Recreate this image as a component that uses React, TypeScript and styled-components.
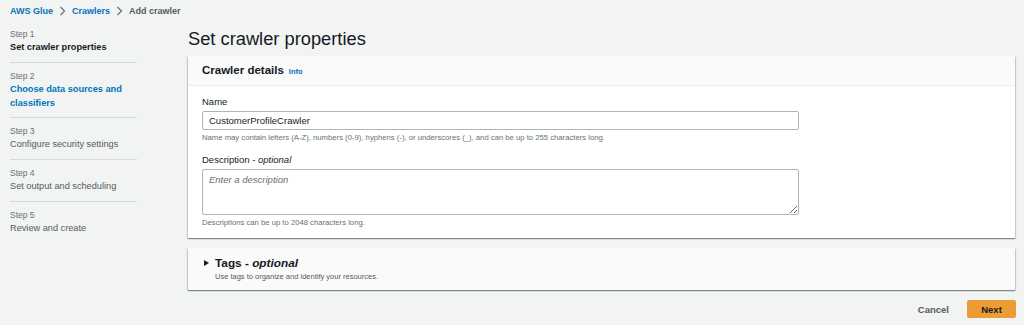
import * as React from "react"
import styled, { createGlobalStyle } from 'styled-components'

const Global = createGlobalStyle`
  body {
    margin: 0;
    background: #f2f3f3;
    font-family: "Liberation Sans", Arial, sans-serif;
    color: #16191f;
  }
`

const steps = [
  { n: 1, title: 'Set crawler properties', state: 'current' },
  { n: 2, title: 'Choose data sources and classifiers', state: 'link' },
  { n: 3, title: 'Configure security settings', state: 'off' },
  { n: 4, title: 'Set output and scheduling', state: 'off' },
  { n: 5, title: 'Review and create', state: 'off' },
]

export default function App() {
  return (
    <Page>
      <Global />
      <Breadcrumbs>
        <Crumb>AWS Glue</Crumb>
        <Chevron />
        <Crumb>Crawlers</Crumb>
        <Chevron />
        <Crumb current>Add crawler</Crumb>
      </Breadcrumbs>
      <Layout>
        <Sidebar>
          {steps.map(s => (
            <StepItem key={s.n}>
              <StepLabel>Step {s.n}</StepLabel>
              <StepTitle state={s.state}>{s.title}</StepTitle>
            </StepItem>
          ))}
        </Sidebar>
        <Main>
          <Title>Set crawler properties</Title>
          <Panel>
            <PanelHeader>
              <PanelTitle>Crawler details</PanelTitle>
              <Info>Info</Info>
            </PanelHeader>
            <PanelBody>
              <Field>
                <Label>Name</Label>
                <Input defaultValue="CustomerProfileCrawler" />
                <Hint>Name may contain letters (A-Z), numbers (0-9), hyphens (-), or underscores (_), and can be up to 255 characters long.</Hint>
              </Field>
              <Field>
                <Label>Description - <em>optional</em></Label>
                <TextArea placeholder="Enter a description" />
                <Hint>Descriptions can be up to 2048 characters long.</Hint>
              </Field>
            </PanelBody>
          </Panel>
          <TagsPanel>
            <Caret />
            <div>
              <TagsTitle>Tags - <em>optional</em></TagsTitle>
              <TagsHint>Use tags to organize and identify your resources.</TagsHint>
            </div>
          </TagsPanel>
          <Actions>
            <CancelButton>Cancel</CancelButton>
            <NextButton>Next</NextButton>
          </Actions>
        </Main>
      </Layout>
    </Page>
  )
}

function Chevron() {
  return (
    <svg width="7" height="10" viewBox="0 0 7 10" style={{ margin: '0 6px' }}>
      <path d="M1.5 1 L5.5 5 L1.5 9" fill="none" stroke="#687078" strokeWidth="1.2" />
    </svg>
  )
}

const Page = styled.div`
  width: 1024px;
  height: 325px;
  overflow: hidden;
`

const Breadcrumbs = styled.div`
  display: flex;
  align-items: center;
  height: 20px;
  padding: 1px 10px 0;
  font-size: 9px;
  font-weight: bold;
`

const Crumb = styled.span<{ current?: boolean }>`
  color: ${p => (p.current ? '#545b64' : '#0073bb')};
`

const Layout = styled.div`
  display: grid;
  grid-template-columns: 127px 1fr;
  column-gap: 51px;
  padding: 0 9px 0 10px;
`

const Sidebar = styled.div`
  display: flex;
  flex-direction: column;
  padding-top: 7px;
`

const StepItem = styled.div`
  padding: 7px 0 8px;
  border-bottom: 1px solid #d5dbdb;
  &:first-child { padding-top: 0; }
  &:nth-child(2) { padding-bottom: 7px; }
  &:last-child { border-bottom: none; }
`

const StepLabel = styled.div`
  font-size: 8.5px;
  color: #687078;
  line-height: 12px;
`

const StepTitle = styled.div<{ state: string }>`
  font-size: 9.2px;
  line-height: 14px;
  font-weight: ${p => (p.state === 'off' ? 'normal' : 'bold')};
  color: ${p => (p.state === 'current' ? '#16191f' : p.state === 'link' ? '#0073bb' : '#545b64')};
`

const Main = styled.div`
  display: flex;
  flex-direction: column;
`

const Title = styled.h1`
  margin: 1px 0 0;
  font-size: 18.3px;
  font-weight: normal;
  line-height: 34px;
  color: #16191f;
`

const Panel = styled.div`
  background: #fff;
  box-shadow: 0 1px 1px 0 rgba(0, 28, 36, 0.3), 1px 1px 1px 0 rgba(0, 28, 36, 0.15), -1px 1px 1px 0 rgba(0, 28, 36, 0.15);
`

const PanelHeader = styled.div`
  display: flex;
  align-items: baseline;
  gap: 5px;
  background: #fafafa;
  height: 30px;
  box-sizing: border-box;
  padding: 8px 14px 0;
  border-bottom: 1px solid #eaeded;
`

const PanelTitle = styled.span`
  font-size: 11.5px;
  font-weight: bold;
`

const Info = styled.span`
  font-size: 7.5px;
  font-weight: bold;
  color: #0073bb;
`

const PanelBody = styled.div`
  padding: 9px 14px 10px;
  display: flex;
  flex-direction: column;
  gap: 10px;
`

const Field = styled.div`
  display: flex;
  flex-direction: column;
  width: 597px;
`

const Label = styled.label`
  font-size: 9.5px;
  line-height: 14px;
  margin-bottom: 2px;
  em { font-style: italic; }
`

const Input = styled.input`
  box-sizing: border-box;
  height: 19px;
  border: 1px solid #aab7b8;
  border-radius: 2px;
  padding: 0 6px;
  font-family: inherit;
  font-size: 9.5px;
  color: #16191f;
  outline: none;
`

const TextArea = styled.textarea`
  box-sizing: border-box;
  height: 46px;
  border: 1px solid #aab7b8;
  border-radius: 2px;
  padding: 4px 6px;
  font-family: inherit;
  font-size: 9.5px;
  resize: vertical;
  outline: none;
  &::placeholder { color: #687078; font-style: italic; }
`

const Hint = styled.div`
  font-size: 7.7px;
  color: #687078;
  margin-top: 3px;
  line-height: 10px;
`

const TagsPanel = styled.div`
  margin-top: 10px;
  height: 42px;
  box-sizing: border-box;
  background: #fafafa;
  display: flex;
  gap: 6px;
  padding: 7px 16px 0;
  box-shadow: 0 1px 1px 0 rgba(0, 28, 36, 0.3), 1px 1px 1px 0 rgba(0, 28, 36, 0.15), -1px 1px 1px 0 rgba(0, 28, 36, 0.15);
`

const Caret = styled.span`
  width: 0;
  height: 0;
  margin-top: 5px;
  border-top: 3.5px solid transparent;
  border-bottom: 3.5px solid transparent;
  border-left: 5px solid #16191f;
`

const TagsTitle = styled.div`
  font-size: 11.8px;
  font-weight: bold;
  line-height: 16px;
  em { font-style: italic; }
`

const TagsHint = styled.div`
  font-size: 7.5px;
  color: #545b64;
  line-height: 11px;
`

const Actions = styled.div`
  display: flex;
  justify-content: flex-end;
  align-items: center;
  gap: 18px;
  margin-top: 10px;
  margin-right: -1px;
`

const CancelButton = styled.button`
  background: none;
  border: none;
  font-family: inherit;
  font-size: 9.5px;
  font-weight: bold;
  color: #545b64;
  padding: 0;
`

const NextButton = styled.button`
  width: 49px;
  height: 18px;
  border: none;
  border-radius: 2px;
  background: #ec9c35;
  font-family: inherit;
  font-size: 9.5px;
  font-weight: bold;
  color: #16191f;
`
